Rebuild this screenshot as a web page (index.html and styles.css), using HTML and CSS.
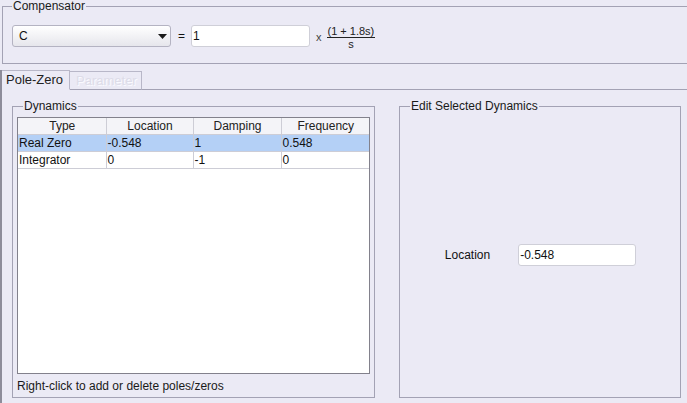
FILE: index.html
```html
<!DOCTYPE html>
<html>
<head>
<meta charset="utf-8">
<link rel="stylesheet" href="styles.css">
</head>
<body>
<div class="app">
  <fieldset class="group comp">
    <legend>Compensator</legend>
    <div class="comp-row">
      <div class="select">
        <span>C</span>
        <svg class="arrow" width="9" height="5" viewBox="0 0 9 5"><path d="M0 0 H9 L4.5 5 Z" fill="#1a1a1a"/></svg>
      </div>
      <span class="eq">=</span>
      <div class="input gain">1</div>
      <span class="times">x</span>
      <div class="frac">
        <span class="num">(1 + 1.8s)</span>
        <span class="den">s</span>
      </div>
    </div>
  </fieldset>

  <div class="tabs">
    <div class="tab active">Pole-Zero</div>
    <div class="tab disabled">Parameter</div>
    <div class="tab-fill"></div>
  </div>

  <div class="panel">
    <fieldset class="group dyn">
      <legend>Dynamics</legend>
      <div class="table-box">
        <table class="grid">
          <colgroup>
            <col class="c1"><col class="c2"><col class="c3"><col class="c4">
          </colgroup>
          <thead>
            <tr><th>Type</th><th>Location</th><th>Damping</th><th>Frequency</th></tr>
          </thead>
          <tbody>
            <tr class="sel"><td>Real Zero</td><td>-0.548</td><td>1</td><td>0.548</td></tr>
            <tr><td>Integrator</td><td>0</td><td>-1</td><td>0</td></tr>
          </tbody>
        </table>
      </div>
      <div class="note">Right-click to add or delete poles/zeros</div>
    </fieldset>

    <fieldset class="group edit">
      <legend>Edit Selected Dynamics</legend>
      <div class="edit-body">
        <div class="edit-row">
          <span class="lbl">Location</span>
          <div class="input loc">-0.548</div>
        </div>
      </div>
    </fieldset>
  </div>
</div>
</body>
</html>
```

FILE: styles.css
```css
html, body {
  margin: 0;
  padding: 0;
}
body {
  background: #ebeaf5;
  font-family: "Liberation Sans", Arial, sans-serif;
  font-size: 12px;
  color: #111;
  width: 687px;
  height: 403px;
  overflow: hidden;
}
.app {
  display: flex;
  flex-direction: column;
}
.group {
  border: 1px solid #a3a2b4;
  margin: 0;
  min-width: 0;
}
.group > legend {
  padding: 0 1px;
  line-height: 12px;
  font-size: 12px;
  color: #1a1a1a;
}
.comp {
  margin-left: 2px;
  border-right: none;
  padding: 13px 0 16px 9px;
}
.comp-row {
  display: flex;
  align-items: center;
  height: 22px;
}
.select {
  box-sizing: border-box;
  width: 159px;
  height: 22px;
  border: 1px solid #b4b3c2;
  border-radius: 3px;
  background: linear-gradient(#ffffff, #e6e6ec);
  display: flex;
  align-items: center;
  justify-content: space-between;
  padding: 0 3px 0 6px;
}
.arrow {
  margin-top: 1px;
}
.eq {
  margin-left: 7px;
  width: 13px;
}
.input {
  box-sizing: border-box;
  background: #fff;
  border: 1px solid #cfcfd8;
  border-radius: 3px;
  height: 22px;
  display: flex;
  align-items: center;
  padding-left: 1px;
}
.gain {
  width: 119px;
}
.times {
  font-size: 11px;
  color: #444;
  margin-left: 6px;
  margin-top: 2px;
}
.frac {
  display: flex;
  flex-direction: column;
  align-items: center;
  margin-left: 5px;
  margin-top: 2px;
  font-size: 11px;
  line-height: 10px;
  color: #222;
}
.num {
  border-bottom: 1px solid #222;
  padding: 0 1px 1px;
}
.den {
  padding-top: 1px;
}

.tabs {
  display: flex;
  margin-top: 6px;
  height: 20px;
  border-left: 2px solid #8d8c9a;
}
.tab {
  box-sizing: border-box;
  height: 20px;
  font-size: 13px;
  line-height: 18px;
  border: 1px solid #b8b7c8;
  padding: 0 3px 0 4px;
}
.tab.active {
  border-left: none;
  border-bottom-color: #ebeaf5;
  color: #222;
  width: 68px;
}
.tab.disabled {
  margin-top: 1px;
  height: 19px;
  border-left: none;
  border-bottom-color: #a3a2b4;
  color: #dddce8;
  text-shadow: 1px 1px 0 #fafaff;
  width: 72px;
  padding-left: 6px;
}
.tab-fill {
  flex: 1;
  border-bottom: 1px solid #a3a2b4;
}

.panel {
  display: flex;
  gap: 24px;
  padding: 10px 0 10px 10px;
  border-left: 2px solid #8d8c9a;
}
.dyn {
  width: 363px;
  box-sizing: border-box;
  padding: 5px 4px 4px 4px;
}
.dyn > legend {
  margin-left: 6px;
}
.table-box {
  box-sizing: border-box;
  height: 257px;
  border: 1px solid #82818c;
  background: #fff;
}
.grid {
  border-collapse: collapse;
  table-layout: fixed;
  width: 351px;
}
.c1 { width: 88px; }
.c2 { width: 87px; }
.c3 { width: 88px; }
.c4 { width: 88px; }
.grid th, .grid td {
  height: 16px;
  padding: 0 0 0 1px;
  line-height: 16px;
  border: 1px solid #cdcdd6;
  white-space: nowrap;
  overflow: hidden;
}
.grid tr > :first-child {
  border-left: none;
}
.grid tr > :last-child {
  border-right: none;
}
.grid thead tr th {
  border-top: none;
  font-weight: normal;
  text-align: center;
  background: #f4f4f8;
  color: #222;
}
.grid tr.sel td {
  background: #b4d0f6;
}
.note {
  margin-top: 5px;
  line-height: 14px;
  color: #1a1a1a;
}
.edit {
  width: 282px;
  box-sizing: border-box;
  padding: 0;
  display: flex;
  flex-direction: column;
}
.edit > legend {
  margin-left: 10px;
}
.edit-body {
  flex: 1;
  display: flex;
  align-items: center;
  justify-content: center;
}
.edit-row {
  display: flex;
  align-items: center;
  gap: 28px;
  margin-left: 1px;
}
.loc {
  width: 118px;
}
```
